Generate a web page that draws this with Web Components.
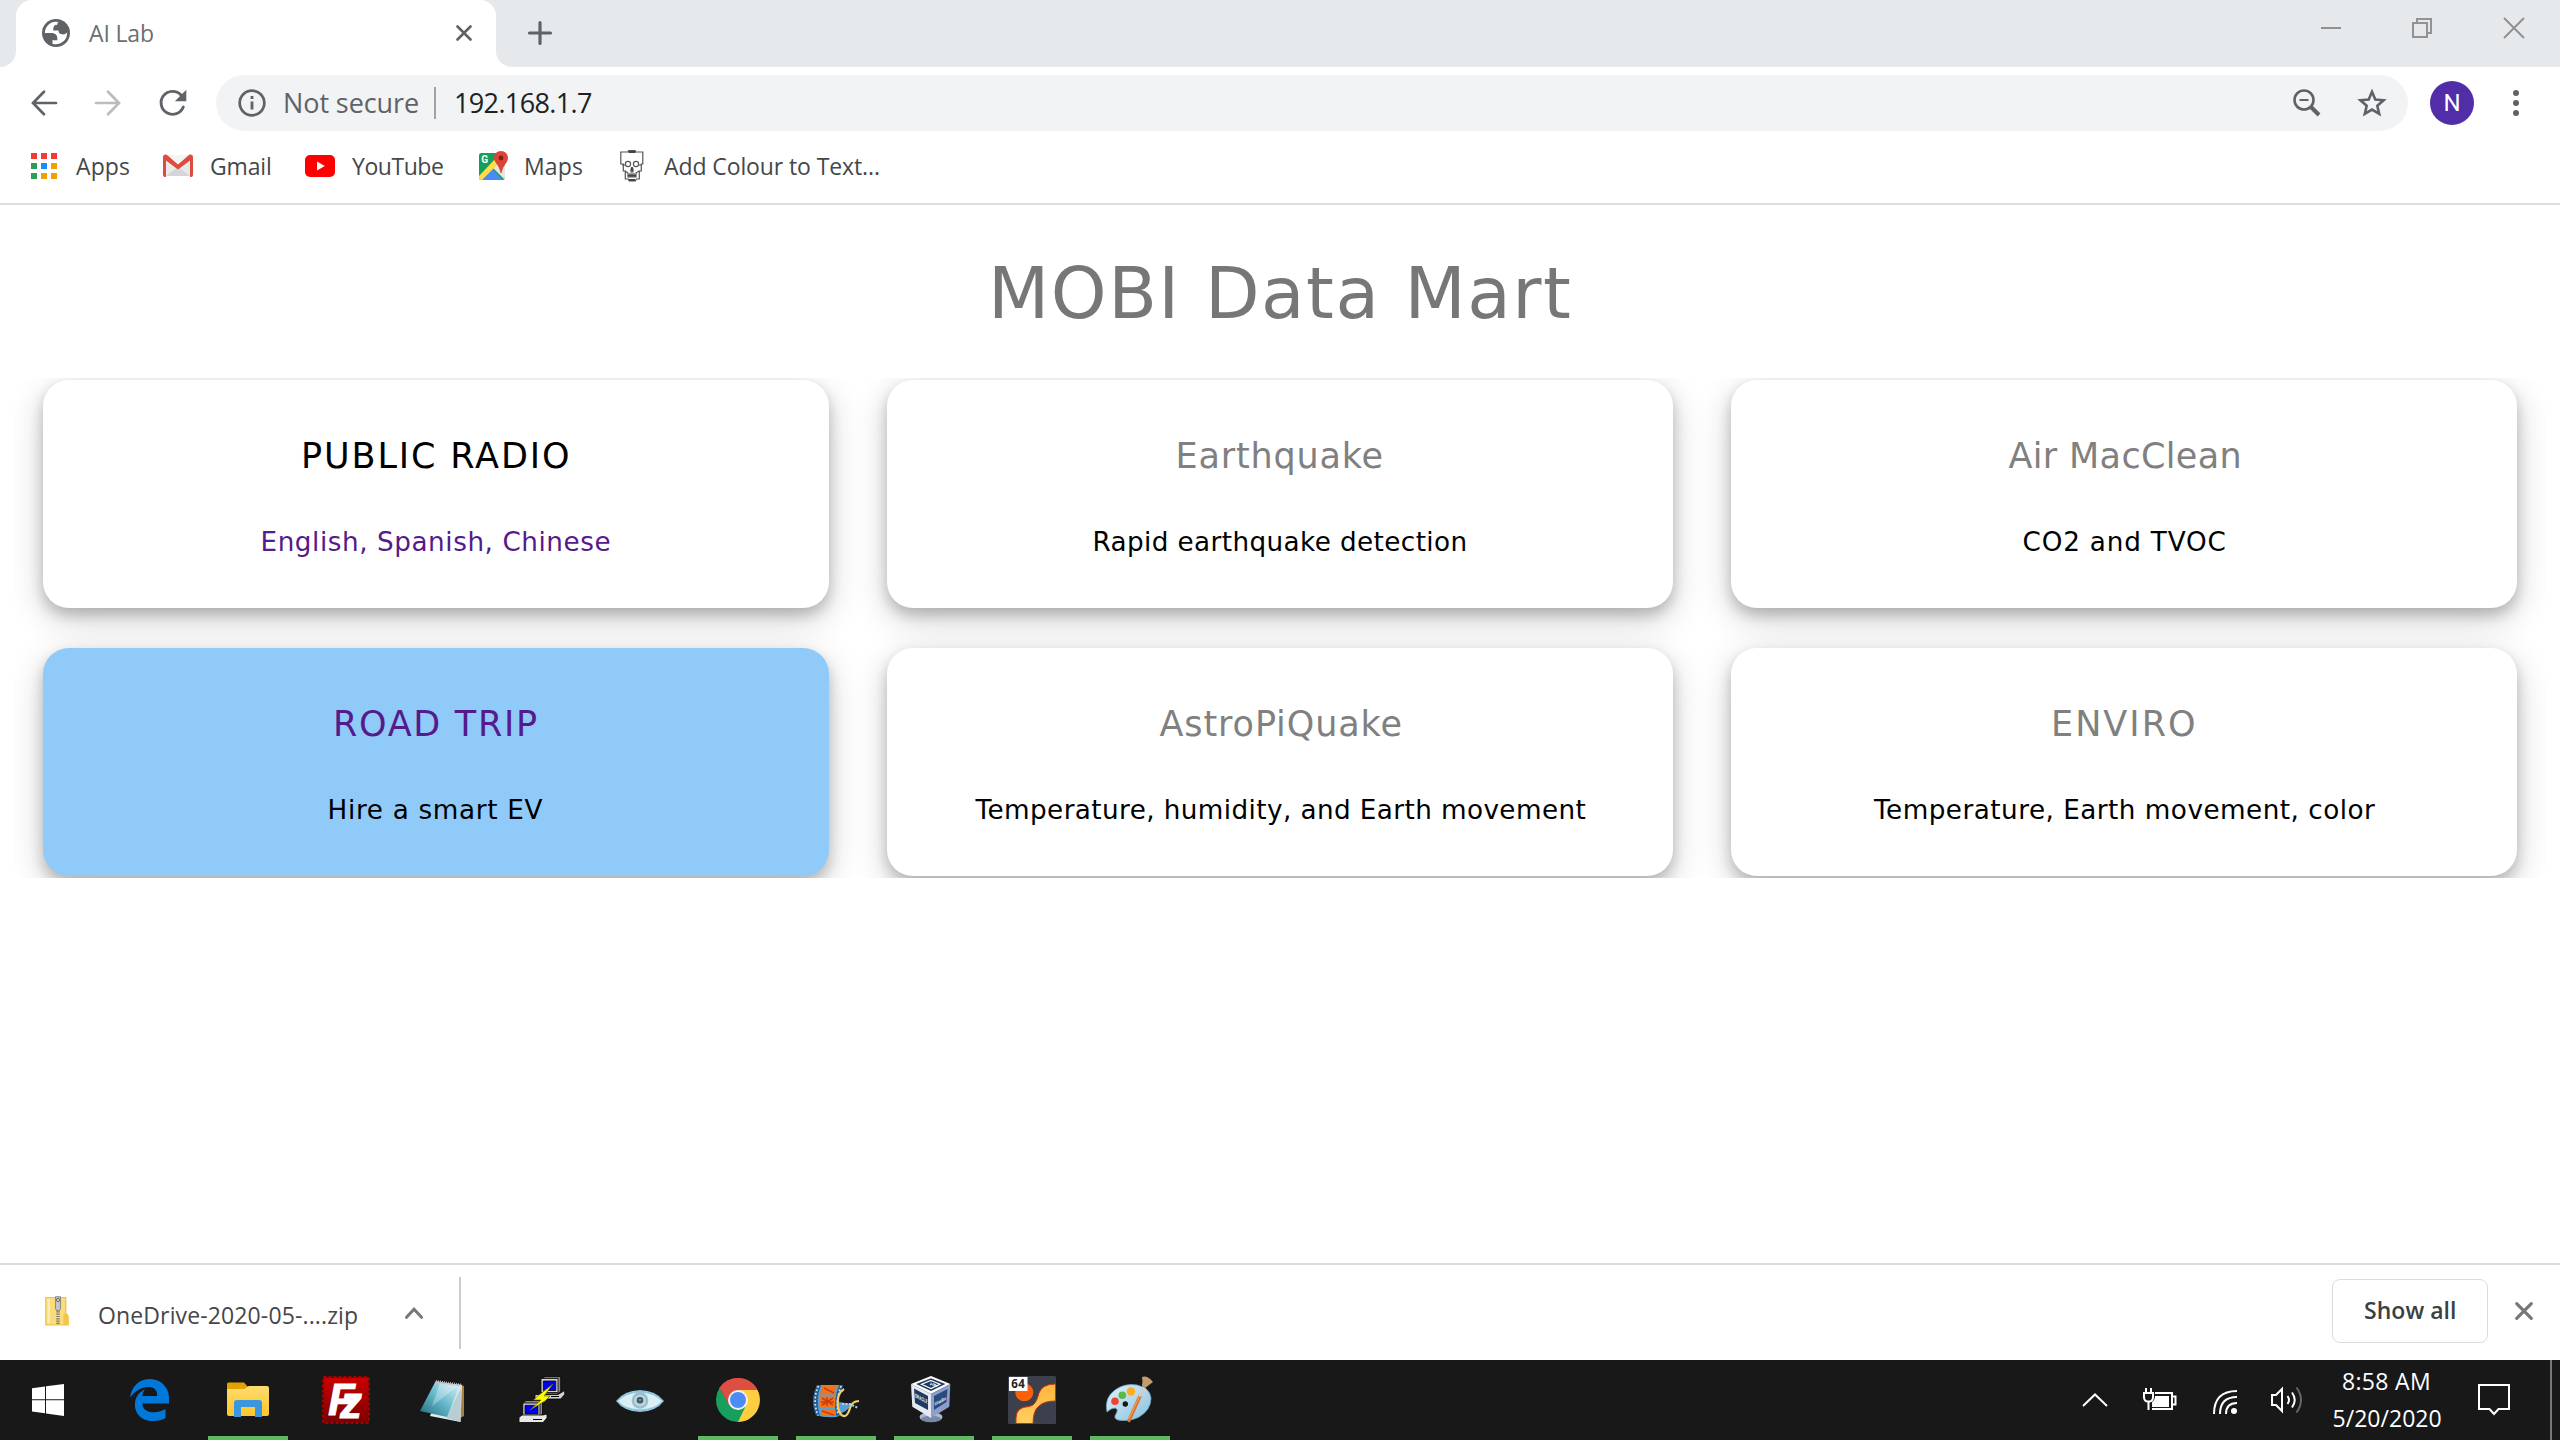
<!DOCTYPE html>
<html lang="en">
<head>
<meta charset="utf-8">
<title>AI Lab</title>
<style>
html,body{margin:0;padding:0;background:#fff}
body{width:2560px;height:1440px;overflow:hidden;font-family:"Open Sans","Noto Sans",sans-serif}
</style>
</head>
<body>
<desk-screen></desk-screen>
<script>
const define=(name,html,setup)=>customElements.define(name,class extends HTMLElement{
  connectedCallback(){
    if(this.shadowRoot)return;
    const r=this.attachShadow({mode:'open'});
    r.innerHTML=html;
    if(setup)setup.call(this,r);
  }
});

/* One line of text whose ink spans exactly `w` pixels. */
const pen=document.createElement('canvas').getContext('2d');
define('fit-text','<style>:host{display:flex;flex:none;white-space:pre}span{display:block;flex:none}</style><span></span>',function(r){
  const s=r.querySelector('span'),t=this.getAttribute('t'),w=+this.getAttribute('w');
  const cs=getComputedStyle(this);
  pen.font=`${cs.fontWeight} ${cs.fontSize} ${cs.fontFamily}`;
  s.textContent=t;
  const m=pen.measureText(t),bearings=m.width-m.actualBoundingBoxLeft-m.actualBoundingBoxRight;
  const ink=s.getBoundingClientRect().width-bearings;
  s.style.letterSpacing=((w-ink)/(t.length-1)).toFixed(3)+'px';
  s.style.marginLeft=m.actualBoundingBoxLeft.toFixed(2)+'px';
  this.style.width=w+'px';
});

const ICONS={
globe:[28,28,'<g transform="translate(-2.8 -2.8) scale(1.4)"><circle cx="12" cy="12" r="10" fill="#5f6368"/><path fill="#fff" d="M4 12h4.400c3.407.022 4.922 1.730 4.543 5.127H9.488v2.470a8.004 8.004 0 0 0 10.498-8.083C19.327 12.504 18.332 13 17 13c-2.137 0-3.206-.916-3.206-2.750h-3.748c-.274-2.728.683-4.092 2.870-4.092 0-.975.327-1.597.811-1.970A8.004 8.004 0 0 0 4 12z"/></g>'],
x:[16,16,'<path d="M1.500 1.500l13 13m0-13l-13 13" stroke="#5f6368" stroke-width="2.700" stroke-linecap="round"/>'],
xb:[18,18,'<path d="M1.700 1.700l14.600 14.600m0-14.600l-14.600 14.600" stroke="#75787b" stroke-width="3.200" stroke-linecap="round"/>'],
plus:[24,24,'<path d="M12 1.500v21M1.500 12h21" stroke="#5f6368" stroke-width="3.200" stroke-linecap="round"/>'],
min:[20,20,'<path d="M0 10h20" stroke="#929292" stroke-width="2"/>'],
restore:[20,20,'<path d="M1 5h14v14H1zM5 4V1h14v14h-4" fill="none" stroke="#929292" stroke-width="2"/>'],
close:[20,20,'<path d="M0 0l20 20M20 0L0 20" stroke="#8e8e8e" stroke-width="1.800"/>'],
back:[26,26,'<path d="M25 13H2.500M13 1.800L2 13l11 11.200" fill="none" stroke="#5f6368" stroke-width="2.700" stroke-linecap="round"/>'],
fwd:[26,26,'<path d="M1 13h22.500M13 1.800L24 13 13 24.200" fill="none" stroke="#babcbe" stroke-width="2.700" stroke-linecap="round"/>'],
reload:[28,28,'<path d="M24.300 18A11.500 11.500 0 1 1 22 6" fill="none" stroke="#5f6368" stroke-width="2.900" stroke-linecap="round"/><path d="M27.300.8v11.400H15.900z" fill="#5f6368"/>'],
info:[28,28,'<circle cx="14" cy="14" r="12.300" fill="none" stroke="#5f6368" stroke-width="2.700"/><path d="M14 12.500v8M14 7v3" stroke="#5f6368" stroke-width="2.800"/>'],
zoomout:[28,28,'<circle cx="11" cy="11" r="9.500" fill="none" stroke="#5f6368" stroke-width="2.600"/><path d="M18 18l8 8" stroke="#5f6368" stroke-width="4"/><path d="M6.500 11h9" stroke="#5f6368" stroke-width="2"/>'],
star:[30,30,'<path d="M15 3.800l3.300 7.700 8.300.7-6.300 5.500 1.900 8.200-7.200-4.300-7.200 4.300 1.900-8.200-6.300-5.500 8.300-.7z" fill="none" stroke="#5f6368" stroke-width="2.600"/>'],
dots:[6,28,'<g fill="#5f6368"><circle cx="3" cy="4" r="3"/><circle cx="3" cy="14" r="3"/><circle cx="3" cy="24" r="3"/></g>'],
apps:[26,26,'<path fill="#f53b30" d="M0 0h6v6H0zM10 0h6v6h-6zM20 0h6v6h-6z"/><path fill="#2d9d58" d="M0 10h6v6H0zM0 20h6v6H0z"/><path fill="#1a8cff" d="M10 10h6v6h-6z"/><path fill="#f0a000" d="M20 10h6v6h-6zM10 20h6v6h-6zM20 20h6v6h-6z"/>'],
gmail:[30,24,'<path fill="#e9e9e9" d="M3 1h24v21H3z"/><path fill="#d5d5d5" d="M3 22l12-9 12 9z"/><path fill="#f4f4f4" d="M4 1h22L15 11z"/><path fill="#dd4b3e" d="M0 3C0 1 2 0 4 1l11 9.500L26 1c2-1 4 0 4 2v18q0 2-2 2h-1V6.500L15 15.500 3 6.500V23H2q-2 0-2-2z"/>'],
youtube:[30,22,'<rect width="30" height="22" rx="5" fill="#f00"/><path fill="#fff" d="M12 6.500l7.800 4.500-7.800 4.500z"/>'],
maps:[30,30,'<defs><clipPath id="c"><rect y="2" width="26" height="27" rx="2.500"/></clipPath></defs><g clip-path="url(#c)"><path fill="#159f5c" d="M0 2h26v27H0z"/><path fill="#e4e4e4" d="M26 5v24L12 15z"/><path fill="#4a8af4" d="M2 29l11-11.500L24 29z"/><path fill="#ffdc48" d="M0 29v-4L17 7l3 5L3 29z"/></g><path fill="#dc4437" d="M22 0c4 0 7 3 7 6.800 0 5.200-5 7-6.500 15.200h-1C20.500 14 15 12 15 6.800 15 3 18 0 22 0z"/><circle cx="22" cy="7" r="2.400" fill="#7c2118"/><text x="2.300" y="12" font-family="Roboto,sans-serif" font-size="10" font-weight="700" fill="#fff">G</text>'],
skull:[24,32,'<g fill="none" stroke="#555" stroke-width="1.200"><path d="M.8 2h7l1-1.200h6l1 1.200h7v12h-1.500v7h-2v8h-3l-1 2h-6l-1-2h-3v-8h-2v-7H.8z"/><circle cx="8" cy="14" r="2.600"/><circle cx="16" cy="14" r="2.600"/><path d="M2 15h3M19 15h3M11 19h2v3h-2zM5 21l3 2v4h8v-4l3-2M8 25h8M10 23v4M12 23v4M14 23v4"/></g><path fill="#444" d="M8.500.3h7V3h-7zM11 17h2v4h-2zM8 25h8v1.500H8zM9 29h6v2H9z"/>'],
zip:[24,30,'<path fill="#fbdc7d" stroke="#eac347" stroke-width="1.200" d="M.8 1.500h20v16l2.400 3V29H.8z"/><path fill="#fdecb0" d="M2.500 3H5v24H2.500z"/><path fill="#f2c64b" d="M18.300 29V20q0-3 2.300-3t2.300 3v9z"/><path stroke="#777" stroke-width="3.500" d="M13 13v16" stroke-dasharray="1.200 1.100"/><path fill="#c5c5c5" stroke="#777" stroke-width=".8" d="M10.500.7h5v12l-1 2h-3l-1-2z"/><circle cx="13" cy="4" r="1.500" fill="#fff" stroke="#555"/>'],
caret:[18,12,'<path d="M1.500 10.300L9 2.300l7.500 8" fill="none" stroke="#75787b" stroke-width="3" stroke-linecap="round"/>'],
win:[48,48,'<path fill="#fff" d="M8 12.300l13-1.800v12.800H8zM22 10.300L40 8v15.300H22zM8 24.300h13v13L8 35.500zM22 24.300h18V40l-18-2.500z"/>'],
edge:[48,48,'<path fill="#0078d9" transform="translate(1.800 2.300) scale(.0848)" d="M486.290 243.670c0-44-7.760-84.460-28.810-122.400C416.500 47.880 343.910 8 258.890 8 119 7.720 40.620 113.210 26.060 227.680c42.420-61.310 117.070-121.380 220.370-125 0 0 109.670 0 99.420 105H170c6.370-37.390 18.550-59 34.340-78.930-75.050 34.900-121.850 96.100-120.750 188.320.83 71.450 50.130 144.840 120.750 172 83.350 31.840 192.770 7.200 240.130-21.330V363.310C363.600 419.800 173.600 424.230 172.210 295.740H486.290z"/>'],
folder:[48,48,'<defs><linearGradient id="f" x2="0" y2="1"><stop stop-color="#ffdb6e"/><stop offset="1" stop-color="#fdc62c"/></linearGradient></defs><path fill="url(#f)" d="M3 11h19l3-1h18q2 0 2 2v26q0 2-2 2H5q-2 0-2-2z"/><path fill="#e3a200" d="M3 8q0-1.500 1.500-1.500H20l3.500 4-3 2.500H3z"/><path fill="#3a97e0" d="M10 41V27q0-3 3-3h22q3 0 3 3v14h-7V31H17v10z"/>'],
fz:[48,48,'<defs><linearGradient id="z" x2="0" y2="1"><stop stop-color="#c80000"/><stop offset="1" stop-color="#7c0000"/></linearGradient></defs><rect x="1.500" y="1.500" width="45" height="45" fill="url(#z)" stroke="#a80000" stroke-width="3" stroke-dasharray="3 2"/><rect x="2" y="2" width="44" height="44" fill="url(#z)"/><text x="6 18" y="38.500 42" font-size="44" font-family="Liberation Sans,sans-serif" font-weight="700" font-style="italic" fill="#fff" stroke="#fff" stroke-width=".8">Fz</text>'],
notepad:[48,48,'<defs><linearGradient id="n" x1="0" y1="1" x2="1" y2="0"><stop stop-color="#1e6c7c"/><stop offset=".5" stop-color="#67b9cb"/><stop offset="1" stop-color="#e2f6fb"/></linearGradient></defs><path fill="#a9803f" d="M38 8l6 2v30l-4 2z"/><path fill="#dfeaec" d="M24 7l18 2-1.500 37L10 40z"/><path fill="#b9ced2" d="M41 12l-.5 34L26 42z"/><path fill="url(#n)" d="M15.700 5L40 9 27 41 0 35z"/><path fill="#fff" opacity=".3" d="M20 7l18 3-26 20z"/><path stroke="#bbb" stroke-width="3" stroke-dasharray="1 1" d="M16 5.500l26 3.800"/>'],
putty:[48,48,'<g stroke="#000" stroke-width=".8"><path fill="#8b8b8b" d="M24 2.500L27 .7h15.700V15l-3 3H24z"/><path fill="#d0d0d0" d="M23 2.500h17v14H23z"/><path fill="#00e" d="M25.300 5h12.500v9.500H25.300z"/><path fill="#d0d0d0" d="M17 18.500h23l6.700-4v4l-4 4.500H17z"/><path fill="#8b8b8b" d="M5 27l3-2.500h16.500V38l-3 3H5z"/><path fill="#d0d0d0" d="M4.800 27H22v13.500H4.800z"/><path fill="#00e" d="M7 29.300h13V38H7z"/><path fill="#e8e8e8" d="M1 41.500L4 39h21l4-1v4l-4 4.500H1z"/></g><path stroke="#000" d="M15 43.500h9M33 20.500h8"/><path fill="#ff0" stroke="#665f00" stroke-width=".7" d="M35 8L21 19l-5.500 5H23L12 34l15-9 5-5h-6z"/>'],
eye:[48,48,'<path fill="#8cc4da" d="M0 25Q8 14.500 24 14q16 .5 24 11-8 10.500-24 11Q8 35.500 0 25z"/><path fill="#d9eef5" d="M2 25q7-8 22-8.500Q39 17 46 25q-7 8-22 8.500Q9 33 2 25z"/><circle cx="24" cy="24.500" r="8.300" fill="#9bbccb"/><circle cx="24" cy="24.500" r="6" fill="#b9d3dd"/><circle cx="24" cy="24.300" r="3.200" fill="#44545c"/><circle cx="24" cy="24" r="1" fill="#9ab"/>'],
chrome:[48,48,'<path fill="#dd4f43" d="M24 24L4.950 13A22 22 0 0 1 43.050 13z"/><path fill="#ffcd40" d="M24 24l0-10h19.500A22 22 0 0 1 24 46l-2-3z"/><path fill="#17a05d" d="M24 46A22 22 0 0 1 5.500 12L15.300 29 24 34l7.500-3.500z"/><path fill="#dd4f43" d="M5.500 12A22 22 0 0 1 43.600 14H24l-9 15z"/><circle cx="24" cy="24" r="10" fill="#f1f1f1"/><circle cx="24" cy="24" r="8" fill="#4c8bf5"/>'],
film:[48,48,'<path fill="#5c9fd4" d="M5 9h26q-5 8-4 17l12 2q-2 6-9 9-2 3-6 4Q12 42 4 39-2 24 5 9z"/><path fill="#2a5f92" d="M5 9h4Q3 24 8 40l-4-1Q-2 24 5 9zM27 9h4q-6 13-3 30l-4 1q-3-16 3-31z"/><path stroke="#d7ecfa" stroke-width="1.700" stroke-dasharray="1.700 2" fill="none" d="M6.500 10Q0 24 6 39.500M29 10q-5 14-3 29"/><path fill="#f0741b" d="M10 10h15l-2 8.500H8zM7.500 20.500H23V31H8zM8.500 33H23l1 6.500H10z"/><path stroke="#d13c0a" stroke-width="1.500" d="M9 26h13M15 21v9M10 22l11 7M21 22l-11 7M12 12l10 5M10 35l12 4"/><path fill="none" stroke="#f3cf68" stroke-width="2.200" d="M32 13q-8 5-6 18 2 10 7 9 3-1 5-8t9-7"/><path fill="none" stroke="#a9d4f2" stroke-width="2" stroke-dasharray="2 1.500" d="M30 28l8 0 8 4"/>'],
vbox:[48,48,'<ellipse cx="21" cy="41" rx="11.500" ry="5" fill="#aebbd2"/><ellipse cx="21" cy="43" rx="10" ry="3.300" fill="#7788ab"/><path fill="#fff" d="M21 0l19.300 8L21 18 1 8z"/><path fill="#e3e8f1" d="M1 8l20 10v24L2.300 30.700z"/><path fill="#8c9fc9" d="M40.300 8L21 18v24l18.300-11.300z"/><path fill="#1f3a5f" d="M21 2.300L35.500 8 21 15 6 8zM4 12.500l14 7.500v14L5 27z"/><path fill="#2b4b7e" d="M37.500 13L24 20v14l12.500-8z"/><path fill="none" stroke="#fff" stroke-width="1.200" d="M21 4.500l9 3.700-9 4.400-9.500-4.400z"/><g font-family="Liberation Sans,sans-serif" font-weight="700" fill="#fff"><text transform="matrix(.9 .48 0 1 4.800 21)" font-size="5.500" textLength="14" lengthAdjust="spacingAndGlyphs">ORACLE</text><text transform="matrix(.88 -.48 0 1 24.600 30)" font-size="5" textLength="13" lengthAdjust="spacingAndGlyphs">VirtualBox</text><text transform="matrix(.9 .3 -.6 .5 18.500 8.500)" font-size="6">VM</text></g>'],
calc:[48,48,'<defs><linearGradient id="o" x2="0" y2="1"><stop stop-color="#ffb53c"/><stop offset="1" stop-color="#ffcf62"/></linearGradient></defs><rect width="48" height="48" rx="1.500" fill="#3c404c"/><circle cx="16.300" cy="16.300" r="9" fill="#f8600a"/><path fill="url(#o)" stroke="#c8320c" stroke-width="1" d="M47.500 8Q34 8 31 17q-3 13-10 13.500Q8 31 8 42v5.500h17q0-13 6-17.500 5-5 16.500-5z"/><rect x="1" y="1" width="18.500" height="14" fill="#fff"/><text x="3.300" y="12" font-family="Open Sans,sans-serif" font-size="11.500" font-weight="700" fill="#222" textLength="13.500">64</text>'],
paint:[48,48,'<defs><linearGradient id="p" x2="1" y2="1"><stop stop-color="#e3f2fa"/><stop offset="1" stop-color="#86bfdf"/></linearGradient></defs><path fill="url(#p)" stroke="#71a8c8" stroke-width=".8" d="M1 36Q-2 22 9 14 19 7 31 9q13 3 14 13 0 12-12 19-10 5-21 3-5-2-2-6 3-5-1-6-4 0-8 4z"/><circle cx="19.300" cy="28" r="2.700" fill="#15181b"/><circle cx="9" cy="25.300" r="3.800" fill="#ee4438"/><circle cx="16.300" cy="19.300" r="3.800" fill="#59b947"/><circle cx="25" cy="15.500" r="4.200" fill="#ffae1a"/><path stroke="#d9742a" stroke-width="3.400" stroke-linecap="round" d="M23 44.500L34.500 19"/><path stroke="#f3a55a" stroke-width="1" d="M23 43L34 19"/><path stroke="#c9d0d4" stroke-width="4" d="M33.500 20l5-8.500"/><path fill="#c69b6c" d="M36 1q5-2 11 5-4 3-8 6l-3-2q1-5 0-9z"/>'],
tcaret:[26,14,'<path d="M1 13L13 1.500 25 13" fill="none" stroke="#fff" stroke-width="2"/>'],
battery:[34,26,'<path fill="none" stroke="#fff" stroke-width="2" d="M12 6h17v16H9M30 9.500h2.500v8H30"/><path fill="#fff" d="M12 9h14v11H9v-5q3-2 3-6z"/><path fill="none" stroke="#fff" stroke-width="2" d="M3 1v5M8 1v5M1 6h9v4q0 4-3.500 4.500h-2Q1 14 1 10zM5.500 14v9"/>'],
wifi:[24,24,'<g fill="none" stroke="#fff" stroke-width="2"><path d="M1 24Q1 1 24 1M7 24Q7 7 24 7M13 24q0-11 11-11"/></g><circle cx="21" cy="21" r="3" fill="#fff"/>'],
volume:[32,30,'<path fill="none" stroke="#fff" stroke-width="2" d="M1 10h4l6-6v22l-6-6H1zM16.500 11q3 4 0 8M21 7.500q5.500 7.500 0 15"/><path fill="none" stroke="#666" stroke-width="2" d="M25.500 2.500q9 12.500 0 25"/>'],
message:[32,32,'<path fill="none" stroke="#fff" stroke-width="2" d="M1 1h30v24H20.500L16 30l-4.500-5H1z"/>']
};
define('line-icon','<style>:host{display:block;flex:none}svg{display:block;overflow:visible}</style>',function(r){
  const [w,h,b]=ICONS[this.getAttribute('name')];
  r.innerHTML+=`<svg width="${w}" height="${h}" viewBox="0 0 ${w} ${h}">${b}</svg>`;
});

define('tab-strip',`<style>
:host{display:flex;height:67px;background:#e5e9ec;align-items:stretch}
.edge{width:16px;height:67px;background:#fff;flex:none}
.edge i{display:block;height:67px;background:#e5e9ec;border-radius:0 0 16px 0}
.edge.r i{border-radius:0 0 0 16px}
.tab{width:480px;box-sizing:border-box;background:#fff;border-radius:16px 16px 0 0;display:flex;align-items:center;padding:0 24px 1px 26px}
.tab fit-text{font-size:23px;line-height:30px;margin:-1px 0 0 19px;color:#6b6e72}
.tab .x{margin-left:auto}
.plus{margin:21px 0 0 16px}
.win{display:flex;gap:72px;margin:18px 36px 0 auto}
.win :first-child{margin-right:-1px}
</style><div class="edge"><i></i></div>
<div class="tab"><line-icon name="globe"></line-icon><fit-text t="AI Lab" w="64"></fit-text><line-icon class="x" name="x"></line-icon></div>
<div class="edge r"><i></i></div><line-icon class="plus" name="plus"></line-icon>
<div class="win"><line-icon name="min"></line-icon><line-icon name="restore"></line-icon><line-icon name="close"></line-icon></div>`);

define('tool-bar',`<style>
:host{display:flex;height:72px;align-items:center;box-sizing:border-box;padding:0 41px 0 31px}
.nav{display:flex;gap:38px;align-items:center;width:185px;flex:none}
.box{width:2192px;flex:none;box-sizing:border-box;height:56px;border-radius:28px;background:#f1f3f4;display:flex;align-items:center;padding:0 21px 0 22px;font-size:27px;line-height:36px;color:#5f6368}
.box fit-text{margin-top:-1px}
.sep{width:2px;height:32px;background:#a0a3a6;margin:0 20px 0 16px}
.url{color:#202124}
.zo{margin-left:auto;margin-right:36px}
.av{width:44px;height:44px;flex:none;border-radius:50%;background:#512da8;margin:0 39px 0 22px;display:flex;align-items:center;justify-content:center;color:#fff;font:400 24px/44px Roboto,sans-serif}
</style><div class="nav"><line-icon name="back"></line-icon><line-icon name="fwd"></line-icon><line-icon name="reload"></line-icon></div>
<div class="box"><line-icon name="info"></line-icon><fit-text style="margin-left:19px" t="Not secure" w="133"></fit-text><div class="sep"></div><fit-text class="url" t="192.168.1.7" w="136"></fit-text><line-icon class="zo" name="zoomout"></line-icon><line-icon name="star"></line-icon></div>
<div class="av">N</div><line-icon name="dots"></line-icon>`);

define('book-mark',`<style>:host{display:flex;align-items:center;flex:none;color:#45474a;font-size:23px;line-height:32px}fit-text{margin-top:-1px}</style>`,function(r){
  const a=n=>this.getAttribute(n);
  r.innerHTML+=`<line-icon name="${a('icon')}"></line-icon><fit-text style="margin-left:${a('gap')}px" t="${a('label')}" w="${a('w')}"></fit-text>`;
});
define('bookmark-bar',`<style>:host{display:flex;height:66px;box-sizing:border-box;padding:0 0 10px 31px;border-bottom:2px solid #dadce0;align-items:center}</style>
<book-mark icon="apps" gap="19" label="Apps" w="53"></book-mark>
<book-mark style="margin-left:34px" icon="gmail" gap="18" label="Gmail" w="59"></book-mark>
<book-mark style="margin-left:35px" icon="youtube" gap="17" label="YouTube" w="91"></book-mark>
<book-mark style="margin-left:36px" icon="maps" gap="17" label="Maps" w="56"></book-mark>
<book-mark style="margin-left:38px" icon="skull" gap="20" label="Add Colour to Text..." w="215"></book-mark>`);

define('mart-card',`<style>
:host{display:block;box-sizing:border-box;height:228px;padding-top:54.500px;border-radius:26px;background:var(--card,#fff);box-shadow:0 7px 14px rgba(0,0,0,.2),0 10.500px 35px rgba(0,0,0,.19);font-family:"DejaVu Sans",sans-serif}
fit-text{margin:0 auto}
.h{font-size:35px;line-height:42px;color:var(--head,#808080)}
.s{font-size:26.250px;line-height:32px;margin-top:49px;color:var(--sub,#000)}
</style>`,function(r){
  const a=n=>this.getAttribute(n);
  r.innerHTML+=`<fit-text class="h" t="${a('head')}" w="${a('hw')}"></fit-text><fit-text class="s" t="${a('sub')}" w="${a('sw')}"></fit-text>`;
});
define('mart-page',`<style>
:host{display:block;height:1058px;box-sizing:border-box;padding:44px 14px 0;font-family:"DejaVu Sans",sans-serif}
.t{margin:0 auto;font-size:71px;line-height:90px;color:#777;position:relative;left:2px}
.grid{margin-top:39px;height:500px;box-sizing:border-box;padding:2px 29px 0;overflow:hidden;display:grid;grid-template-columns:repeat(3,1fr);column-gap:58px;row-gap:40px;align-content:start}
</style><fit-text class="t" t="MOBI Data Mart" w="576"></fit-text>
<div class="grid">
<mart-card style="--head:#000;--sub:#551a8b" head="PUBLIC RADIO" hw="264" sub="English, Spanish, Chinese" sw="347"></mart-card>
<mart-card head="Earthquake" hw="203" sub="Rapid earthquake detection" sw="371"></mart-card>
<mart-card head="Air MacClean" hw="231" sub="CO2 and TVOC" sw="201"></mart-card>
<mart-card style="--card:#90caf9;--head:#551a8b" head="ROAD TRIP" hw="200" sub="Hire a smart EV" sw="213"></mart-card>
<mart-card head="AstroPiQuake" hw="241" sub="Temperature, humidity, and Earth movement" sw="611"></mart-card>
<mart-card head="ENVIRO" hw="140" sub="Temperature, Earth movement, color" sw="502"></mart-card>
</div>`);

define('download-shelf',`<style>
:host{display:flex;height:97px;box-sizing:border-box;border-top:2px solid #dadce0;align-items:center;padding:0 27px 0 45px;color:#45474a;font-size:23px;line-height:32px}
.n{margin:4px 48px 0 30px}
.sep{width:2px;height:72px;background:#ccc;margin-left:36px}
.btn{margin:-3px 27px 0 auto;box-sizing:border-box;width:156px;height:64px;border:1px solid #dadce0;border-radius:8px;display:flex;align-items:center;justify-content:center;font-weight:600;color:#3c4043}
</style><line-icon name="zip" style="margin-top:-4px"></line-icon><fit-text class="n" t="OneDrive-2020-05-....zip" w="258"></fit-text><line-icon name="caret"></line-icon><div class="sep"></div>
<div class="btn"><fit-text style="margin-top:-2px" t="Show all" w="90"></fit-text></div><line-icon name="xb" style="margin-top:-3px"></line-icon>`);

define('task-item',`<style>
:host{display:flex;width:98px;height:80px;flex:none;flex-direction:column;align-items:center}
line-icon{margin-top:16px}
i{display:block;width:80px;height:4px;margin-top:12px}
:host([open]) i{background:#5fb95f}
</style>`,function(r){r.innerHTML+=`<line-icon name="${this.getAttribute('icon')}"></line-icon><i></i>`});

define('task-bar',`<style>
:host{display:flex;height:80px;background:#181818;color:#fff;align-items:center;box-sizing:border-box}
.apps{display:flex}
.tray{display:flex;align-items:center;margin-left:auto}
.clock{display:flex;flex-direction:column;align-items:center;font-size:23px;line-height:37px;width:108px;margin:-1px 37px 0 30px}
.clock :first-child{margin-right:2px}
.end{width:8px;height:80px;border-left:2px solid #777;margin-left:40px}
</style><div class="apps"><task-item style="width:96px" icon="win"></task-item><task-item style="margin-left:5px" icon="edge"></task-item><task-item icon="folder" open></task-item><task-item icon="fz"></task-item><task-item icon="notepad"></task-item><task-item icon="putty"></task-item><task-item icon="eye"></task-item><task-item icon="chrome" open></task-item><task-item icon="film" open></task-item><task-item icon="vbox" open></task-item><task-item icon="calc" open></task-item><task-item icon="paint" open></task-item></div>
<div class="tray"><line-icon name="tcaret"></line-icon><line-icon style="margin-left:35px" name="battery"></line-icon><line-icon style="margin:4px 0 0 36px" name="wifi"></line-icon><line-icon style="margin-left:34px" name="volume"></line-icon>
<div class="clock"><fit-text t="8:58 AM" w="86"></fit-text><fit-text t="5/20/2020" w="107"></fit-text></div>
<line-icon name="message"></line-icon><div class="end"></div></div>`);

define('desk-screen',`<style>:host{display:block;width:2560px;height:1440px;background:#fff}</style>
<tab-strip></tab-strip><tool-bar></tool-bar><bookmark-bar></bookmark-bar><mart-page></mart-page><download-shelf></download-shelf><task-bar></task-bar>`);
</script>
</body>
</html>
